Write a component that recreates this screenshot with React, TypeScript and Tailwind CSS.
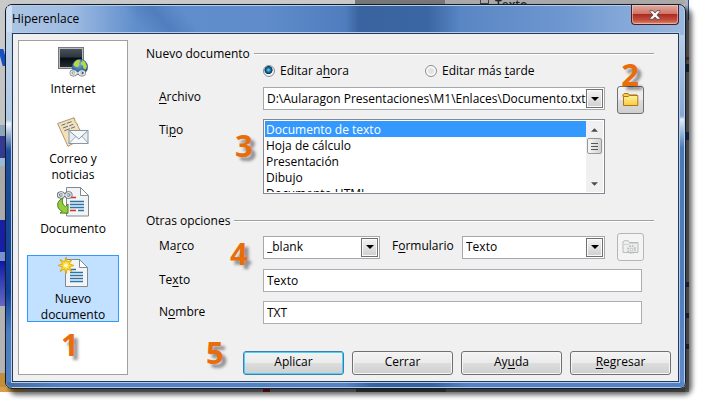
import type { ReactNode } from "react";

function InternetIcon() {
  return (
    <svg width="30" height="30" viewBox="0 0 30 30" className="shrink-0" aria-hidden="true">
      <defs>
        <linearGradient id="screen" x1="0" y1="0" x2="0" y2="1">
          <stop offset="0" stopColor="#46525c" />
          <stop offset="0.45" stopColor="#2b353e" />
          <stop offset="0.5" stopColor="#070b0f" />
          <stop offset="1" stopColor="#222d36" />
        </linearGradient>
        <radialGradient id="sea" cx="0.4" cy="0.3" r="0.8">
          <stop offset="0" stopColor="#7fb2e0" />
          <stop offset="0.6" stopColor="#2a68ac" />
          <stop offset="1" stopColor="#123a70" />
        </radialGradient>
      </defs>
      <rect x="0.5" y="0.5" width="25" height="21" fill="#b9b9b6" stroke="#77787a" />
      <rect x="2" y="2" width="22" height="18" fill="url(#screen)" />
      <circle cx="22" cy="20" r="7.7" fill="url(#sea)" stroke="#2f5d8d" strokeWidth="0.6" />
      <path d="M16 16l2.500-2.800 3-.4.500 1.700-1.500 1.800.8 1.700-1.800 2.200-2.500-.7-1.600-1.500z" fill="#b8da3e" />
      <path d="M24 12.800l3 2 1.900 4.200-.9 3.600-2.400-.8-.8-3.200-2.100-1 .5-2.600 1.500-.6z" fill="#b8da3e" />
      <g fill="none" stroke="#70777c" strokeWidth="2.600">
        <ellipse cx="15.500" cy="26" rx="2.600" ry="2.100" />
        <ellipse cx="24" cy="26" rx="2.600" ry="2.100" />
        <path d="M16 26h8" />
      </g>
      <g fill="none" stroke="#eceeee" strokeWidth="1.300">
        <ellipse cx="15.500" cy="26" rx="2.600" ry="2.100" />
        <ellipse cx="24" cy="26" rx="2.600" ry="2.100" />
        <path d="M16 26h8" />
      </g>
    </svg>
  );
}

function MailIcon() {
  return (
    <svg width="32" height="30" viewBox="0 0 32 30" className="shrink-0" aria-hidden="true">
      <path d="M0.6 6.5L17 .8l6 12.5-1 10L11 29.4z" fill="#f5e1b8" stroke="#a98d63" strokeWidth="0.9" />
      <path d="M17 .8l1 4.2 3 2.8" fill="#fff3d7" stroke="#a98d63" strokeWidth="0.7" />
      <g stroke="#58718c" strokeWidth="1">
        <path d="M4.5 8.3l4-1.5M9.8 6.3l4.8-1.7M6 11l5-1.8M12.3 8.8l4-1.5M7.3 13.8l5.6-2.1M14 11.3l4-1.5" />
      </g>
      <rect x="12" y="13.5" width="19" height="13" fill="#e6edf3" stroke="#8996a3" />
      <path d="M12.500 26l7-7.200h5l6.500 7.200" fill="#f7fafc" stroke="#92a0ad" strokeWidth="0.9" />
      <path d="M12.500 14l9.300 8 8.700-8" fill="#f5f8fb" stroke="#8494a5" />
    </svg>
  );
}

function DocumentIcon() {
  return (
    <svg width="32" height="30" viewBox="0 0 32 30" className="shrink-0" aria-hidden="true">
      <path d="M9.500.5h14l8 8v20.500h-22z" fill="#f1f3f4" stroke="#7f8a91" />
      <path d="M23.500.5v8h8z" fill="#fff" stroke="#7f8a91" />
      <g strokeWidth="1.300">
        <path d="M13 10.500h6M13 23.500h6" stroke="#dc2f24" />
        <path d="M21 23.500h6M13 14.500h14M13 17.500h14M13 20.500h14" stroke="#2b73ad" />
      </g>
      <g fill="none" stroke="#687178" strokeWidth="3">
        <ellipse cx="4" cy="8" rx="2.600" ry="2.300" />
        <ellipse cx="11.500" cy="8" rx="2.600" ry="2.300" />
        <path d="M4 8h7" />
      </g>
      <g fill="none" stroke="#e6e9eb" strokeWidth="1.200">
        <ellipse cx="4" cy="8" rx="2.600" ry="2.300" />
        <ellipse cx="11.500" cy="8" rx="2.600" ry="2.300" />
        <path d="M4 8h7" />
      </g>
      <path d="M6 11.500C1 12.500-.5 18 1.500 21.200 2.500 23 4 23.700 5.200 24.300L3 26l8 .2V17l-2.500 2.500C5.500 18 4.500 14.500 6 11.500z" fill="#94ce3e" stroke="#477f18" />
    </svg>
  );
}

function NewDocumentIcon() {
  return (
    <svg width="32" height="30" viewBox="0 0 32 30" className="shrink-0" aria-hidden="true">
      <path d="M8.500 2.500h14l8 8V29.500h-22z" fill="#f3f4f5" stroke="#7f8a91" />
      <path d="M22.500 2.500v8h8z" fill="#fff" stroke="#7f8a91" />
      <path d="M13 12.500h6M13 15.500h13M13 18.500h13M13 21.500h13M13 24.500h13" stroke="#2b73ad" strokeWidth="1.300" />
      <path d="M9 0l1.300 5.200L15 2.500l-2.700 4.600L17 8.500l-4.700 1.400L15 14.500l-4.700-2.700L9 17l-1.300-5.200L3 14.500l2.700-4.600L1 8.500l4.700-1.400L3 2.500l4.700 2.700z" fill="#ffe03a" stroke="#e2a300" strokeWidth="0.900" />
      <circle cx="9" cy="8.500" r="2" fill="#fff9c0" />
    </svg>
  );
}

function FolderIcon() {
  return (
    <svg width="17" height="14" viewBox="0 0 17 14" aria-hidden="true">
      <defs>
        <linearGradient id="folder" x1="0" y1="0" x2="0" y2="1">
          <stop offset="0" stopColor="#fff3a0" />
          <stop offset="1" stopColor="#f8cc3a" />
        </linearGradient>
      </defs>
      <path d="M1 3.500V1.800L2.200.6h4L7.500 2H15v2" fill="#f9d257" stroke="#a8690f" />
      <path d="M1.500 12.500V3.500H6l1.500-1h8.300v10z" fill="url(#folder)" stroke="#b3740f" />
    </svg>
  );
}

function DisabledFolderIcon() {
  return (
    <svg width="18" height="15" viewBox="0 0 18 15" aria-hidden="true" fill="none" stroke="#b9bcbd">
      <path d="M1 12.500V2L2.200.700h4L7.500 2.500H16v10z" fill="#eeeeee" />
      <path d="M1.500 4.500H6l1.500-1h8" stroke="#d0d2d3" />
      <circle cx="9.500" cy="9.500" r="3.500" strokeDasharray="1.500 1.250" strokeWidth="2" />
      <circle cx="9.500" cy="9.500" r="1.200" fill="#fff" />
    </svg>
  );
}

function CloseGlyph() {
  return (
    <svg width="12" height="10" viewBox="0 0 12 10" aria-hidden="true">
      <path d="M1 .7h3L6 3 8 .7h3v1L8 5l3 3.300v1H8L6 7 4 9.300H1v-1L4 5 1 1.700z" fill="#f7f7f7" stroke="#54545c" strokeWidth="0.900" />
    </svg>
  );
}

function Triangle({ up = false, small = false }: { up?: boolean; small?: boolean }) {
  const size = small ? 7 : 8;
  return (
    <svg width={size} height="4" viewBox="0 0 8 4" aria-hidden="true">
      <path d={up ? "M0 4h8L4 0z" : "M0 0h8L4 4z"} fill={small ? "#4c4c4c" : "#000"} />
    </svg>
  );
}

function Key({ children }: { children: ReactNode }) {
  return <span className="underline decoration-1 underline-offset-2">{children}</span>;
}

const categories = [
  { lines: ["Internet"], icon: <InternetIcon />, selected: false },
  { lines: ["Correo y", "noticias"], icon: <MailIcon />, selected: false },
  { lines: ["Documento"], icon: <DocumentIcon />, selected: false },
  { lines: ["Nuevo", "documento"], icon: <NewDocumentIcon />, selected: true },
];

function Sidebar() {
  return (
    <nav className="w-[110px] shrink-0 self-stretch border border-[#a0a0a0] bg-white px-2 pt-1">
      {categories.map((c) => (
        <div key={c.lines[0]} className="h-[70px]">
          <button
            type="button"
            aria-pressed={c.selected}
            className={
              "flex h-[67px] w-full flex-col items-center gap-1 border pt-px leading-4 " +
              (c.selected ? "border-[#3399ff] bg-[#c2e0ff]" : "border-transparent")
            }
          >
            {c.icon}
            <span>
              {c.lines.map((l) => (
                <span key={l} className="block">{l}</span>
              ))}
            </span>
          </button>
        </div>
      ))}
    </nav>
  );
}

function GroupTitle({ children }: { children: ReactNode }) {
  return (
    <h2 className="flex h-4 items-center gap-1 leading-4">
      {children}
      <span className="h-[2px] flex-1 border-t border-[#a0a0a0] bg-white" />
    </h2>
  );
}

function Dropdown({ id, options, className }: { id: string; options: string[]; className: string }) {
  return (
    <div className={"relative h-[23px] " + className}>
      <select id={id} className="h-full w-full appearance-none border border-[#a5a8ad] bg-white pl-[3px] leading-4 outline-none">
        {options.map((o) => (
          <option key={o}>{o}</option>
        ))}
      </select>
      <span className="pointer-events-none absolute top-[2px] right-[2px] flex h-[19px] w-[17px] items-center justify-center border border-[#707070] bg-linear-to-b from-[#f4f4f4] to-[#cfcfcf] shadow-[inset_0_0_0_1px_#fafafa]">
        <Triangle />
      </span>
    </div>
  );
}

const types = ["Documento de texto", "Hoja de cálculo", "Presentación", "Dibujo", "Documento HTML", "Documento maestro"];

function TypeList() {
  return (
    <div className="flex h-[75px] min-w-0 flex-1 border border-[#828790] bg-white p-px">
      <select
        id="tipo"
        size={5}
        defaultValue={types[0]}
        className="h-full min-w-0 flex-1 overflow-hidden bg-white outline-none [scrollbar-width:none]"
      >
        {types.map((t) => (
          <option
            key={t}
            className="h-4 min-h-0 px-px py-0 leading-4 checked:bg-[#3399ff] checked:bg-[linear-gradient(#3399ff,#3399ff)] checked:text-white"
          >
            {t}
          </option>
        ))}
      </select>
      <div className="flex w-[17px] flex-col items-center bg-[#f0f0f0]" aria-hidden="true">
        <span className="flex h-[17px] items-center"><Triangle up small /></span>
        <span className="flex h-4 w-[15px] flex-col items-center justify-center gap-[2px] rounded-xs border border-[#979797] bg-linear-to-r from-[#f6f6f6] to-[#d2d2d2]">
          <i className="h-px w-[7px] bg-[#555]" />
          <i className="h-px w-[7px] bg-[#555]" />
          <i className="h-px w-[7px] bg-[#555]" />
        </span>
        <span className="mt-auto flex h-[17px] items-center"><Triangle small /></span>
      </div>
    </div>
  );
}

function ActionButton({ children, primary = false }: { children: ReactNode; primary?: boolean }) {
  return (
    <button
      type="button"
      className={
        "h-6 w-[101px] rounded-[3px] border bg-[linear-gradient(#f3f3f3,#ebebeb_50%,#dddddd_50%,#cfcfcf)] pb-[2px] leading-4 " +
        (primary
          ? "border-[#3c7fb1] shadow-[inset_0_0_0_1px_#48d2f5]"
          : "border-[#707070] shadow-[inset_0_0_0_1px_#f6f6f6]")
      }
    >
      {children}
    </button>
  );
}

function Step({ n, className }: { n: number; className: string }) {
  return (
    <span
      className={
        "pointer-events-none absolute z-10 text-[31px] leading-8 font-bold text-[#e96d0b] [text-shadow:4px_4px_3px_rgba(0,0,0,0.4)] " +
        className
      }
    >
      {n}
    </span>
  );
}

const rowLabel = "w-[104px] shrink-0 pb-[2px] leading-4";
const textBox = "h-[23px] min-w-0 flex-1 border border-[#abadb3] bg-white px-[3px] leading-4 outline-none";
const radio =
  "size-3 appearance-none rounded-full border border-[#8e8f8f] bg-[radial-gradient(circle,#e3e3e3_35%,#fff_60%,#d5d5d5)] checked:bg-[radial-gradient(circle_at_45%_40%,#7fe0ff_0,#1684b8_22%,#0b3359_46%,#f4f4f4_54%)]";

function Desktop() {
  return (
    <div className="absolute top-0 right-[15px] bottom-[15px] left-0 overflow-hidden bg-[#c6c6c6]" aria-hidden="true">
      <div className="absolute inset-x-0 top-0 flex h-1">
        <div className="w-[355px] bg-[#c9c9c9]" />
        <div className="w-[90px] bg-[#777777]" />
        <div className="flex-1 bg-[#a9a9a9]" />
      </div>
      <span className="absolute -top-[3px] left-[495px] text-[12px] leading-4 font-semibold text-[#252525]">Texto</span>
      <span className="absolute -top-[5px] left-[480px] size-[9px] border border-[#444]" />
      <div className="absolute inset-y-0 left-0 flex w-[6px] flex-col">
        <div className="h-[49px] bg-[#c9c9c9]" />
        <div className="h-[17px] bg-[linear-gradient(75deg,#c9c9c9_20%,#1750c4_30%,#1750c4_70%,#c9c9c9_80%)]" />
        <div className="h-[59px] bg-[#c4c4c4]" />
        <div className="h-[11px] bg-[#8ea5b9]" />
        <div className="h-[22px] bg-[#353a91]" />
        <div className="h-[8px] bg-[#9db9d8]" />
        <div className="h-[54px] bg-[#aaaaaa]" />
        <div className="h-[32px] bg-[#1720a5]" />
        <div className="h-[9px] bg-[#7693cf]" />
        <div className="h-[45px] bg-linear-to-b from-[#1212a8] to-[#6767c4]" />
        <div className="h-[67px] bg-[#b3b3b3]" />
        <div className="flex-1 bg-[#c58e38]" />
      </div>
      <div className="absolute inset-x-0 bottom-0 flex h-[5px]">
        <div className="w-[25px] bg-[#d9a04a]" />
        <div className="w-[238px] bg-[#a5a5a5]" />
        <div className="w-[7px] bg-[#a51717]" />
        <div className="w-[86px] bg-[#a5a5a5]" />
        <div className="w-[90px] bg-[#585858]" />
        <div className="flex-1 bg-[#8a8a8a]" />
      </div>
      <div className="absolute inset-y-0 right-0 w-[4px] bg-[#a4a4a4]">
        <div className="h-5 border-r border-[#294f91] bg-[#a9b4c6]" />
        <div className="mt-[37px] h-[3px] bg-[#b5482d]" />
        <div className="mt-1 h-[8px] bg-[#284966]" />
        <div className="mt-[60px] h-[8px] bg-[#284f91]" />
        <div className="mt-[142px] h-[5px] bg-[#39457c]" />
        <div className="mt-[26px] h-[5px] bg-[#39457c]" />
        <div className="mt-[26px] h-[5px] bg-[#39457c]" />
      </div>
    </div>
  );
}

export default function App() {
  return (
    <div className="relative flex min-h-screen flex-col bg-white pt-1 pr-[18px] pb-[18px] pl-[5px] font-['Open_Sans','Noto_Sans',sans-serif] text-[12px] text-black">
      <Desktop />
      <main className="relative flex flex-1 flex-col rounded-[7px] border border-[#111c2c] bg-[linear-gradient(to_right,#6e96cc_0,#5f8dcc_16%,#608ccb_38%,#4f7dbd_50%,#39649f_52%,#3a66a3_62%,#5986c4_67%,#6e97d0_82%,#9ab8df)] shadow-[5px_5px_5px_1px_rgba(0,0,0,0.6),inset_0_0_0_1px_#b5cde9]">
        <div className="pointer-events-none absolute inset-y-0 left-0 w-[6px] rounded-l-[6px] bg-[linear-gradient(#c9daed_0,#afc8e2_30%,#f0f6fb_31%,#1e4c96_38%,#123f94_75%,#4b7cbe_85%,#5282c4)]" />
        <div className="pointer-events-none absolute right-px bottom-px h-[352px] w-[5px] bg-[linear-gradient(#b9cde4_0,#87a7d3_23%,#e0ebf6_24%,#4a79ba_32%,#4f7dbd_70%,#618acb)]" />
        <div className="pointer-events-none absolute inset-x-px bottom-px h-[5px] rounded-b-[5px] bg-[linear-gradient(to_right,#466c9f,#5282c4_8%,#5483c5_50%,#37639f_54%,#37639f_63%,#5483c5_68%,#5483c5)]" />

        <header className="relative flex h-7 shrink-0 items-center justify-between pr-[6px] pl-[6px]">
          <div className="pointer-events-none absolute inset-y-px left-px w-[130px] bg-[linear-gradient(to_right,rgba(215,229,245,0.6),rgba(205,222,243,0.55)_50%,transparent)]" />
          <div className="pointer-events-none absolute inset-y-px left-[110px] w-[90px] bg-[linear-gradient(50deg,transparent_25%,rgba(45,90,155,0.3)_50%,transparent_75%)]" />
          <h1 className="relative leading-4">Hiperenlace</h1>
          <button
            type="button"
            aria-label="Cerrar ventana"
            className="relative flex h-[20px] w-[48px] items-center justify-center self-start rounded-b-[4px] border border-t-0 border-[#45202b] bg-[linear-gradient(#e3aaa0,#cd7365_48%,#ad2b1e_50%,#c4503f_80%,#da8a6e)] shadow-[inset_0_0_0_1px_rgba(255,220,210,0.5)]"
          >
            <CloseGlyph />
          </button>
        </header>

        <div className="relative mx-[6px] mb-[6px] flex flex-1 border border-[#23395c] bg-[#f0f0f0] py-[6px] pl-[5px] shadow-[0_0_0_1px_#b5cde9]">
          <Sidebar />
          <form className="flex min-w-0 flex-1 flex-col pt-[6px] pr-[7px] pl-[18px]" onSubmit={(e) => e.preventDefault()}>
            <div className="pr-[17px]">
              <GroupTitle>Nuevo documento</GroupTitle>
            </div>
            <div className="mt-px flex h-4 items-center pl-[117px] leading-4">
              <label className="flex w-[162px] items-center gap-[5px]">
                <input type="radio" name="editar" defaultChecked className={radio} />
                <span>Editar a<Key>h</Key>ora</span>
              </label>
              <label className="flex items-center gap-[5px]">
                <input type="radio" name="editar" className={radio} />
                <span>Editar más <Key>t</Key>arde</span>
              </label>
            </div>
            <div className="mt-[7px] flex h-7 items-start pr-[27px] pl-[13px]">
              <label htmlFor="archivo" className={rowLabel + " pt-[3px]"}><Key>A</Key>rchivo</label>
              <Dropdown id="archivo" className="mt-px min-w-0 flex-1" options={["D:\\Aularagon Presentaciones\\M1\\Enlaces\\Documento.txt"]} />
              <button type="button" aria-label="Seleccionar ruta" className="ml-3 flex h-7 w-[27px] items-center justify-center rounded-[3px] border border-[#707070] bg-[linear-gradient(#f3f3f3,#ebebeb_50%,#dddddd_50%,#cfcfcf)]">
                <FolderIcon />
              </button>
            </div>
            <div className="mt-[5px] flex items-start pr-[66px] pl-[13px]">
              <label htmlFor="tipo" className={rowLabel + " pt-[3px]"}>Ti<Key>p</Key>o</label>
              <TypeList />
            </div>
            <div className="mt-[19px] pr-[17px]">
              <GroupTitle>Otras opciones</GroupTitle>
            </div>
            <div className="mt-1 flex h-7 items-center pr-[27px] pl-[13px]">
              <label htmlFor="marco" className={rowLabel}>Ma<Key>r</Key>co</label>
              <Dropdown id="marco" className="w-[117px]" options={["_blank", "_parent", "_self", "_top"]} />
              <label htmlFor="formulario" className="w-[82px] shrink-0 pb-[2px] pl-3 leading-4">F<Key>o</Key>rmulario</label>
              <Dropdown id="formulario" className="min-w-0 flex-1" options={["Texto", "Botón"]} />
              <button type="button" disabled aria-label="Eventos" className="ml-3 flex h-7 w-[27px] items-center justify-center rounded-[3px] border border-[#b4b7b8] bg-[#f4f4f4]">
                <DisabledFolderIcon />
              </button>
            </div>
            <div className="mt-2 flex items-center pr-[29px] pl-[13px]">
              <label htmlFor="texto" className={rowLabel}>Te<Key>x</Key>to</label>
              <input id="texto" type="text" defaultValue="Texto" className={textBox} />
            </div>
            <div className="mt-[9px] flex items-center pr-[29px] pl-[13px]">
              <label htmlFor="nombre" className={rowLabel}>N<Key>o</Key>mbre</label>
              <input id="nombre" type="text" defaultValue="TXT" className={textBox} />
            </div>
            <div className="mt-auto flex justify-end gap-2">
              <ActionButton primary>Aplicar</ActionButton>
              <ActionButton>Cerrar</ActionButton>
              <ActionButton>Ay<Key>u</Key>da</ActionButton>
              <ActionButton><Key>R</Key>egresar</ActionButton>
            </div>
          </form>
        </div>

        <Step n={1} className="bottom-7 left-[55px]" />
        <Step n={2} className="top-[53px] right-[46px]" />
        <Step n={3} className="top-[124px] left-[229px]" />
        <Step n={4} className="top-[232px] left-[224px]" />
        <Step n={5} className="bottom-5 left-[200px]" />
      </main>
    </div>
  );
}
